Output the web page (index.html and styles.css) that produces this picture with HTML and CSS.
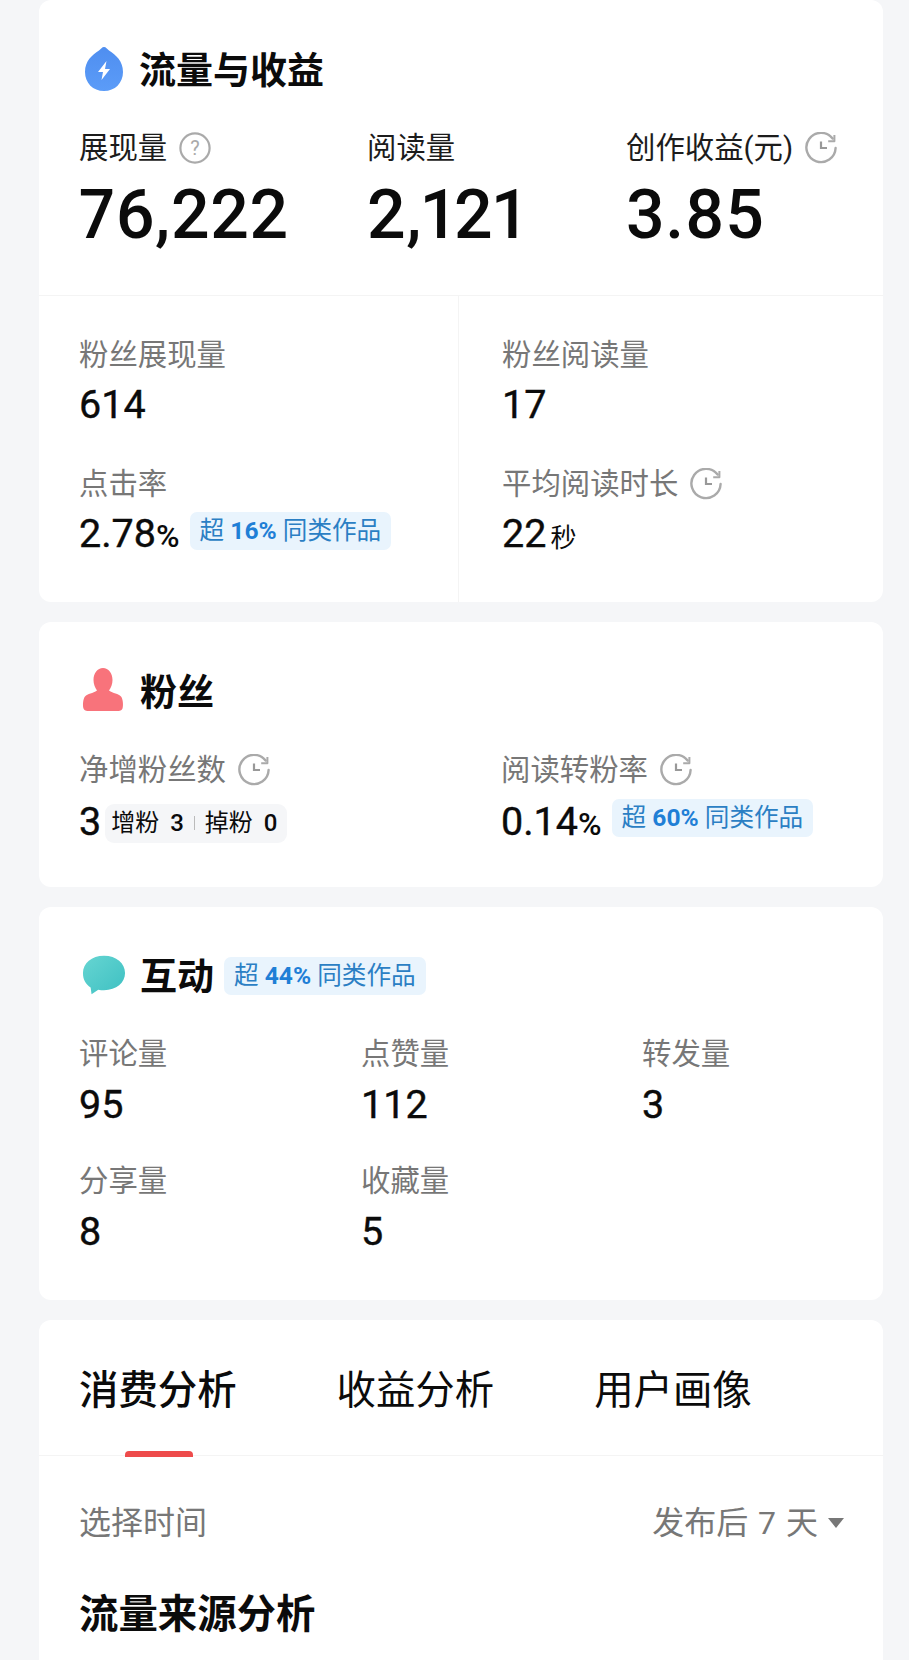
FILE: index.html
```html
<!DOCTYPE html>
<html lang="zh-CN">
<head>
    <meta charset="UTF-8">
    <meta name="viewport" content="width=device-width, initial-scale=1.0">
    <title>流量与收益</title>
    <link rel="stylesheet" href="styles.css">
</head>
<body>
    <svg class="defs" width="0" height="0" aria-hidden="true">
        <defs>
            <symbol id="clock" viewBox="0 0 32 32">
                <path d="M27.6 6.600A14.600 14.600 0 1 0 30.600 16" fill="none" stroke="#aaa" stroke-width="2.400" stroke-linecap="round"/>
                <path d="M29.400 3v6.200h-6.200" fill="none" stroke="#aaa" stroke-width="2" stroke-linejoin="round"/>
                <path d="M16 9.500V16h6" fill="none" stroke="#999" stroke-width="2.200"/>
            </symbol>
            <symbol id="help" viewBox="0 0 32 32">
                <circle cx="16" cy="16" r="14.600" fill="none" stroke="#aaa" stroke-width="2.200"/>
                <text x="16" y="23" text-anchor="middle" font-size="20" fill="#aaa" font-family="Roboto, sans-serif">?</text>
            </symbol>
        </defs>
    </svg>

    <div class="page">
        <section class="card">
            <div class="card-head">
                <svg class="head-icon drop-icon" viewBox="0 0 42 46">
                    <defs>
                        <linearGradient id="dropFill" x1="0" y1="0" x2="0" y2="1">
                            <stop offset="0" stop-color="#4f8ef0"/>
                            <stop offset="1" stop-color="#5b9cf8"/>
                        </linearGradient>
                    </defs>
                    <path d="M22 1c2 0 3 2 5 3.500C34 9 41 15 41 26c0 11-8 19-19 19S3 37 3 26C3 15 10 9 17 4.500 19 3 20 1 22 1z" fill="url(#dropFill)"/>
                    <path d="M24.500 15 16 26h5l-1.500 8L28 23h-5z" fill="#fff"/>
                </svg>
                <h2>流量与收益</h2>
            </div>
            <div class="main-stats">
                <div class="main-stat">
                    <div class="label dark">展现量 <svg class="tip"><use href="#help"/></svg></div>
                    <div class="big">76,222</div>
                </div>
                <div class="main-stat">
                    <div class="label dark">阅读量</div>
                    <div class="big">2,121</div>
                </div>
                <div class="main-stat">
                    <div class="label dark">创作收益(元) <svg class="tip"><use href="#clock"/></svg></div>
                    <div class="big">3.85</div>
                </div>
            </div>
            <div class="sub-stats">
                <div class="stat">
                    <div class="label">粉丝展现量</div>
                    <div class="num">614</div>
                </div>
                <div class="stat">
                    <div class="label">粉丝阅读量</div>
                    <div class="num">17</div>
                </div>
                <div class="stat">
                    <div class="label">点击率</div>
                    <div class="num">2.78<small>%</small><span class="rank">超 <b>16%</b> 同类作品</span></div>
                </div>
                <div class="stat">
                    <div class="label">平均阅读时长 <svg class="tip"><use href="#clock"/></svg></div>
                    <div class="num">22<small class="unit">秒</small></div>
                </div>
            </div>
        </section>

        <section class="card fans">
            <div class="card-head">
                <svg class="head-icon person-icon" viewBox="0 0 42 46">
                    <path d="M21 1c5.500 0 9.500 5 9.500 12 0 4-1.500 8-3.500 10.500 4 3 9.500 3 12 6 2 2.500 2.500 9 1.500 12-.5 1.500-2 2.500-4 2.500H5.500c-2 0-3.500-1-4-2.500-1-3-.5-9.500 1.500-12 2.500-3 8-3 12-6C13 21 11.500 17 11.500 13c0-7 4-12 9.500-12z" fill="#f8737b"/>
                </svg>
                <h2>粉丝</h2>
            </div>
            <div class="fan-stats">
                <div class="stat">
                    <div class="label">净增粉丝数 <svg class="tip"><use href="#clock"/></svg></div>
                    <div class="num">3<span class="delta">增粉<b>3</b><i></i>掉粉<b>0</b></span></div>
                </div>
                <div class="stat">
                    <div class="label">阅读转粉率 <svg class="tip"><use href="#clock"/></svg></div>
                    <div class="num">0.14<small>%</small><span class="rank">超 <b>60%</b> 同类作品</span></div>
                </div>
            </div>
        </section>

        <section class="card interact">
            <div class="card-head">
                <svg class="head-icon chat-icon" viewBox="0 0 46 42">
                    <defs>
                        <linearGradient id="chatFill" x1="0" y1="0" x2="1" y2="1">
                            <stop offset="0" stop-color="#66d5d2"/>
                            <stop offset="1" stop-color="#3ec0c2"/>
                        </linearGradient>
                    </defs>
                    <path d="M23 1c13 0 22 8 22 18S36 37 23 37c-2 0-4 0-6-.600L10 41l-1-7C4 31 1 26 1 19 1 9 10 1 23 1z" fill="url(#chatFill)"/>
                </svg>
                <h2>互动</h2>
                <span class="rank head-rank">超 <b>44%</b> 同类作品</span>
            </div>
            <div class="grid-stats">
                <div class="stat"><div class="label">评论量</div><div class="num">95</div></div>
                <div class="stat"><div class="label">点赞量</div><div class="num">112</div></div>
                <div class="stat"><div class="label">转发量</div><div class="num">3</div></div>
                <div class="stat"><div class="label">分享量</div><div class="num">8</div></div>
                <div class="stat"><div class="label">收藏量</div><div class="num">5</div></div>
            </div>
        </section>

        <section class="card analysis">
            <div class="tabs">
                <div class="tab active">消费分析</div>
                <div class="tab">收益分析</div>
                <div class="tab">用户画像</div>
            </div>
            <div class="time-row">
                <span>选择时间</span>
                <span class="time-pick">发布后 7 天<i class="caret"></i></span>
            </div>
            <h3>流量来源分析</h3>
        </section>
    </div>
</body>
</html>
```

FILE: styles.css
```css
* {
    box-sizing: border-box;
}

html, body {
    height: 100%;
}

body {
    margin: 0;
    background-color: #f5f6f8;
    color: #0b0b0b;
    font-family: Roboto, "Noto Sans CJK SC", sans-serif;
    overflow: hidden;
}

.defs {
    position: absolute;
}

.page {
    padding: 0 26px 0 39px;
    display: flex;
    flex-direction: column;
    gap: 20px;
}

.card {
    background-color: #fff;
    border-radius: 12px;
}

.card-head {
    display: flex;
    align-items: center;
    height: 50px;
    padding-left: 43px;
}

.head-icon {
    width: 42px;
    height: 46px;
    margin-right: 15px;
}

.drop-icon {
    margin-bottom: 6px;
}

.person-icon {
    margin-right: 16px;
    margin-bottom: 8px;
}

.chat-icon {
    width: 44px;
    margin-right: 14px;
    margin-bottom: 6px;
}

h2 {
    margin: 0;
    font-size: 37px;
    line-height: 50px;
    font-weight: 700;
}

.label {
    display: flex;
    align-items: center;
    gap: 12px;
    font-size: 29.4px;
    line-height: 40px;
    color: #777;
    white-space: nowrap;
}

.label.dark {
    color: #1c1c1c;
}

.tip {
    width: 32px;
    height: 32px;
}

/* 顶部三个大数字 */
.card:first-child {
    padding-top: 47px;
}

.main-stats {
    display: flex;
    margin-top: 31px;
    padding: 0 0 41px 40px;
    border-bottom: 1px solid #f4f4f4;
}

.main-stat:nth-child(1) {
    width: 288px;
}

.main-stat:nth-child(2) {
    width: 259px;
}

.big {
    margin-top: 8px;
    font-size: 68px;
    line-height: 78px;
    font-weight: 500;
    letter-spacing: 0.6px;
    font-variant-numeric: proportional-nums;
}

.sub-stats {
    display: grid;
    grid-template-columns: 419px 1fr;
    grid-auto-rows: 129px;
    height: 306px;
    padding-top: 39px;
    background: linear-gradient(#f4f4f4, #f4f4f4) 419px 0 / 1px 100% no-repeat;
}

.sub-stats .stat:nth-child(odd) {
    padding-left: 40px;
}

.sub-stats .stat:nth-child(even) {
    padding-left: 44px;
}

.num {
    display: flex;
    align-items: baseline;
    margin-top: 6px;
    font-size: 39.5px;
    line-height: 48px;
    -webkit-text-stroke: 0.4px #0b0b0b;
    white-space: nowrap;
}

.num small {
    font-size: 32px;
    font-weight: 500;
    -webkit-text-stroke: 0;
}

.num small.unit {
    margin-left: 4px;
    font-size: 26px;
    font-weight: 400;
}

.rank {
    display: inline-block;
    margin-left: 10px;
    margin-bottom: 8px;
    padding: 0 10px;
    height: 38px;
    border-radius: 7px;
    background-color: #e9f4fd;
    color: #2b7fc4;
    font-size: 24.6px;
    font-weight: 400;
    line-height: 38px;
    align-self: center;
    -webkit-text-stroke: 0;
}

.rank b {
    color: #1f7fd6;
    font-weight: 700;
}

.delta {
    display: inline-flex;
    align-items: center;
    align-self: center;
    height: 39px;
    margin-left: 4px;
    margin-top: 2px;
    padding: 0 10px 0 6px;
    border-radius: 9px;
    background-color: #f5f6f8;
    font-size: 24px;
    font-weight: 400;
    -webkit-text-stroke: 0;
}

.delta b {
    margin-left: 11px;
    font-weight: 500;
}

.delta i {
    width: 1px;
    height: 14px;
    margin: 0 10px;
    background-color: #bbb;
}

.fans {
    height: 265px;
    padding-top: 47px;
}

.fan-stats {
    display: grid;
    grid-template-columns: 422px 1fr;
    margin-top: 31px;
    padding-left: 40px;
}

.fan-stats .num {
    margin-top: 8px;
}

.fan-stats .rank {
    margin-bottom: 10px;
}

.interact {
    height: 393px;
    padding-top: 46px;
}

.head-rank {
    margin-left: 10px;
    margin-bottom: 4px;
    align-self: center;
}

.grid-stats {
    display: grid;
    grid-template-columns: 282px 281px 1fr;
    grid-auto-rows: 127px;
    margin-top: 31px;
    padding-left: 40px;
}

.grid-stats .num {
    margin-top: 7px;
}

.analysis {
    height: 400px;
}

.tabs {
    display: flex;
    gap: 100px;
    height: 136px;
    padding: 46px 0 0 40px;
    border-bottom: 1px solid #f4f4f4;
}

.tab {
    position: relative;
    font-size: 39.4px;
    line-height: 50px;
    height: 90px;
}

.tab.active {
    font-weight: 500;
}

.tab.active::after {
    content: '';
    position: absolute;
    left: 46px;
    bottom: -1px;
    width: 68px;
    height: 6px;
    border-radius: 4px 4px 0 0;
    background-color: #ee4b4b;
}

.time-row {
    display: flex;
    justify-content: space-between;
    align-items: center;
    padding: 46px 39px 0 40px;
    font-size: 32px;
    line-height: 42px;
    color: #777;
}

.time-pick {
    display: flex;
    align-items: center;
    font-size: 32px;
    word-spacing: 2px;
    white-space: nowrap;
}

.caret {
    width: 0;
    height: 0;
    margin-left: 10px;
    border-left: 8px solid transparent;
    border-right: 8px solid transparent;
    border-top: 10px solid #777;
}

h3 {
    margin: 46px 0 0 40px;
    font-size: 39.4px;
    line-height: 50px;
    font-weight: 700;
}
```
